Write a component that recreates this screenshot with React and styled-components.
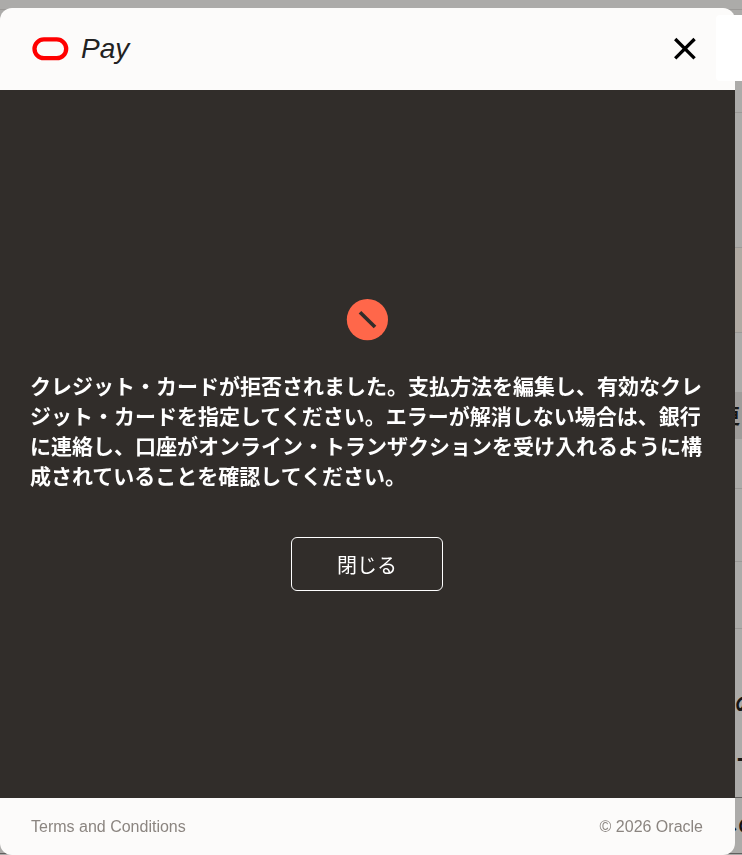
import React, { useState } from "react";
import styled, { createGlobalStyle } from "styled-components";

const sections = [
  { height: 10 },
  { height: 103 },
  { height: 135 },
  { height: 85, tone: "#b0aaa3" },
  { height: 59, line: "#acaba9" },
  {
    height: 47,
    tone: "#9e9c9a",
    line: "#9e9c9a",
    offset: 4,
    texts: [{ text: "更", peek: 22 }],
  },
  { height: 50 },
  { height: 73 },
  { height: 67 },
  {
    height: 169,
    line: "#605f5e",
    offset: 40,
    texts: [
      { text: "の", peek: 7 },
      { text: "ー", peek: 6 },
    ],
  },
  { height: 56, line: "#605f5e", texts: [{ text: "しの", peek: 24 }] },
];

function OracleMark() {
  return (
    <svg width="37" height="24" viewBox="0 0 37 24" aria-hidden="true">
      <rect
        x="2.5"
        y="2.4"
        width="31.7"
        height="18.8"
        rx="9.4"
        fill="none"
        stroke="#ff0000"
        strokeWidth="4.3"
      />
    </svg>
  );
}

function CloseIcon() {
  return (
    <svg width="24" height="24" viewBox="0 0 24 24" aria-hidden="true">
      <path
        d="M2.2 2 21.6 21.4M21.6 2 2.2 21.4"
        stroke="#000"
        strokeWidth="3.3"
      />
    </svg>
  );
}

function DeclinedIcon() {
  return (
    <svg width="42" height="42" viewBox="0 0 42 42" aria-hidden="true">
      <circle cx="21.4" cy="20.6" r="20.6" fill="#ff674a" />
      <path d="M14 13.2 29 28" stroke="#312d2a" strokeWidth="3.7" />
    </svg>
  );
}

function App() {
  const [open, setOpen] = useState(true);

  const closeHandler = () => {
    setOpen(false);
  };

  return (
    <>
      <GlobalStyle />
      <Backdrop aria-hidden="true">
        {sections.map((section, index) => (
          <Section
            key={index}
            $height={section.height}
            $tone={section.tone}
            $line={section.line}
            $offset={section.offset}
          >
            {section.texts?.map((item) => (
              <SectionText key={item.text} $peek={item.peek}>
                {item.text}
              </SectionText>
            ))}
          </Section>
        ))}
      </Backdrop>

      {open && (
        <Overlay>
          <Dialog role="dialog" aria-modal="true" aria-labelledby="message">
            <Header>
              <Brand>
                <OracleMark />
                <BrandName>Pay</BrandName>
              </Brand>
              <IconButton type="button" aria-label="閉じる" onClick={closeHandler}>
                <CloseIcon />
              </IconButton>
            </Header>

            <Content>
              <DeclinedIcon />
              <Message id="message">
                クレジット・カードが拒否されました。支払方法を編集し、有効なクレジット・カードを指定してください。エラーが解消しない場合は、銀行に連絡し、口座がオンライン・トランザクションを受け入れるように構成されていることを確認してください。
              </Message>
              <CloseBtn type="button" onClick={closeHandler}>
                閉じる
              </CloseBtn>
            </Content>

            <Footer>
              <TermsLink href="#terms">Terms and Conditions</TermsLink>
              <span>© 2026 Oracle</span>
            </Footer>
          </Dialog>
          <SidePanel />
        </Overlay>
      )}
    </>
  );
}

const GlobalStyle = createGlobalStyle`
  * {
    box-sizing: border-box;
  }

  body {
    margin: 0;
    overflow: hidden;
    background: #acaba9;
    font-family: "Liberation Sans", "Noto Sans CJK JP", sans-serif;
  }
`;

const Backdrop = styled.div`
  height: 100vh;
  overflow: hidden;
`;

const Section = styled.div`
  display: flex;
  flex-direction: column;
  justify-content: center;
  gap: 32px;
  height: ${(props) => props.$height}px;
  padding-top: ${(props) => props.$offset || 0}px;
  overflow: hidden;
  background: ${(props) => props.$tone || "#acaba9"};
  border-bottom: 1px solid ${(props) => props.$line || "#9b9997"};
`;

const SectionText = styled.span`
  padding-left: calc(100% - ${(props) => props.$peek}px);
  color: #161513;
  font-size: 20px;
  font-weight: bold;
  line-height: 24px;
  white-space: nowrap;
`;

const Overlay = styled.div`
  position: fixed;
  inset: 0;
  padding: 8px 7px 0 0;
`;

const Dialog = styled.section`
  display: flex;
  flex-direction: column;
  height: 100%;
  overflow: hidden;
  background: #fcfbfa;
  border-radius: 12px;
`;

const Header = styled.header`
  display: flex;
  align-items: center;
  justify-content: space-between;
  height: 82px;
  padding: 0 38px 0 32px;
`;

const Brand = styled.div`
  display: flex;
  align-items: center;
  gap: 12px;
`;

const BrandName = styled.span`
  color: #222;
  font-family: "Liberation Sans", Arial, sans-serif;
  font-size: 28px;
  font-style: italic;
  line-height: 32px;
`;

const IconButton = styled.button`
  display: flex;
  padding: 0;
  border: none;
  background: none;
  cursor: pointer;
`;

const Content = styled.main`
  display: flex;
  flex: 1;
  flex-direction: column;
  align-items: center;
  justify-content: center;
  padding: 2px 31px 0 30px;
  background: #312d2a;
`;

const Message = styled.p`
  width: 100%;
  margin: 29px 0 47px;
  color: #fff;
  font-family: "Noto Sans CJK JP", sans-serif;
  font-size: 21px;
  font-weight: bold;
  line-height: 30px;
`;

const CloseBtn = styled.button`
  min-width: 152px;
  height: 54px;
  border: 1px solid #fff;
  border-radius: 6px;
  background: transparent;
  color: #fff;
  font-family: "Noto Sans CJK JP", sans-serif;
  font-size: 20px;
  cursor: pointer;
`;

const Footer = styled.footer`
  display: flex;
  align-items: center;
  justify-content: space-between;
  height: 57px;
  padding: 0 32px 0 31px;
  color: #8b8580;
  font-size: 16px;
`;

const TermsLink = styled.a`
  color: inherit;
  text-decoration: none;
`;

const SidePanel = styled.div`
  position: absolute;
  top: 15px;
  right: 0;
  width: 26px;
  height: 66px;
  border-radius: 4px 0 0 4px;
  background: #fff;
`;

export default App;
